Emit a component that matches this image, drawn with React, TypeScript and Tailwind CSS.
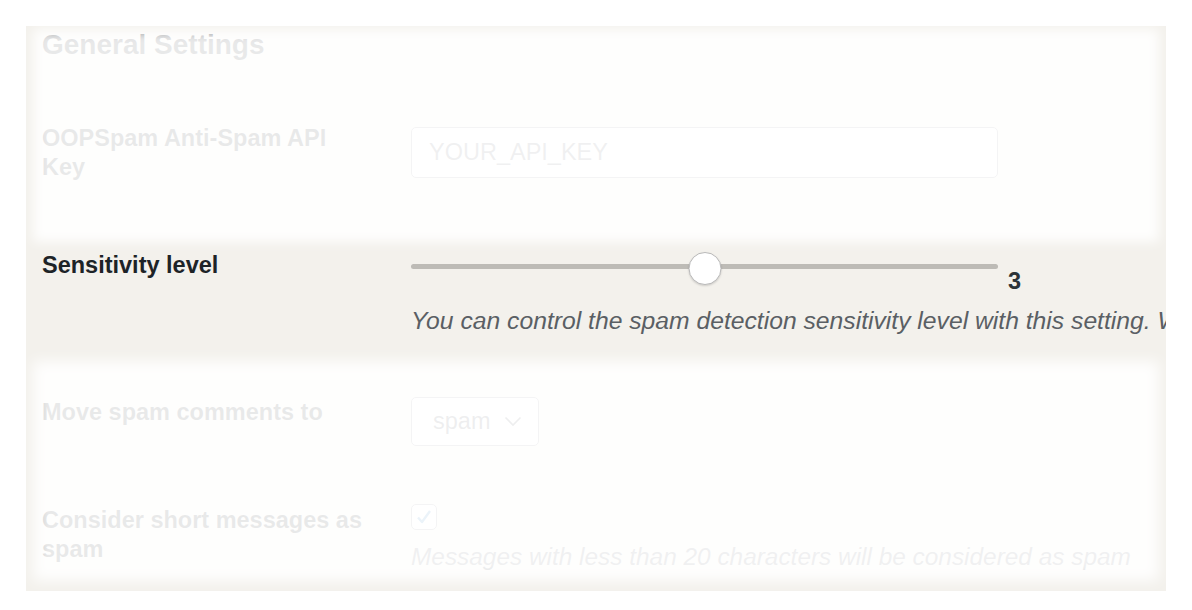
import { useState } from 'react'

const FONT = { fontFamily: '"Liberation Sans", Arial, sans-serif' }

function Row({ label, className = '', labelClass = '', children }: {
  label: React.ReactNode
  className?: string
  labelClass?: string
  children: React.ReactNode
}) {
  return (
    <div className={`flex items-start ${className}`}>
      <div className={`w-[369px] shrink-0 pr-[10px] text-[23.5px] leading-[29px] font-bold text-[#1d2327] ${labelClass}`}>
        {label}
      </div>
      <div className="flex flex-col">{children}</div>
    </div>
  )
}

export default function App() {
  const [level] = useState(3)
  const pct = ((level - 1) / 4) * 100

  return (
    <div className="min-h-screen bg-white pt-[26px] pl-[26px]" style={FONT}>
      <div className="relative w-[1140px] h-[565px] overflow-hidden bg-[#f3f1ec] pl-[16px] pt-[1px]">
        <h2 className="text-[28px] leading-[36px] font-bold text-[#1d2327]">General Settings</h2>

        {/* API key */}
        <Row label={<>OOPSpam Anti-Spam API<br />Key</>} className="mt-[61px]">
          <div className="mt-[3px] w-[587px] h-[51px] rounded-[5px] border border-[#8c8f94] bg-white pl-[17px] flex items-center">
            <span className="text-[23.5px] text-[#646970]">YOUR_API_KEY</span>
          </div>
        </Row>

        {/* Sensitivity */}
        <Row label="Sensitivity level" className="mt-[69px]">
          <div className="flex items-start mt-[1px]">
            <div className="relative w-[587px] h-[33px]">
              <div className="absolute left-0 right-0 top-[12px] h-[5px] rounded-full bg-[#bdbbb6]" />
              <div
                className="absolute top-0 w-[33px] h-[33px] -translate-x-1/2 rounded-full bg-white border border-[#b9b9b9] shadow-[0_1px_2px_rgba(0,0,0,0.15)]"
                style={{ left: `calc(16px + (100% - 32px) * ${pct / 100})` }}
              />
            </div>
            <span className="ml-[10px] mt-[18px] text-[23.5px] leading-[23px] font-bold text-[#2c3338]">{level}</span>
          </div>
          <p className="mt-[13px] whitespace-nowrap text-[24.7px] leading-[30px] italic text-[#5a5f64]">
            You can control the spam detection sensitivity level with this setting. With higher values more comments are marked as spam.
          </p>
        </Row>

        {/* Move spam */}
        <Row label="Move spam comments to" className="mt-[61px]" labelClass="pt-[1px]">
          <div className="w-[128px] h-[49px] rounded-[5px] border border-[#8c8f94] bg-white flex items-center pl-[21px]">
            <span className="text-[23.5px] text-[#50575e]">spam</span>
            <svg className="ml-[14px]" width="18" height="11" viewBox="0 0 18 11" fill="none">
              <path d="M1.5 1.5 L9 9 L16.5 1.5" stroke="#50575e" strokeWidth="1.6" />
            </svg>
          </div>
        </Row>

        {/* Short messages */}
        <Row label={<>Consider short messages as<br />spam</>} className="mt-[58px]" labelClass="pt-[2px]">
          <div className="w-[26px] h-[26px] rounded-[5px] border border-[#8c8f94] bg-white flex items-center justify-center">
            <svg width="18" height="18" viewBox="0 0 18 18" fill="none">
              <path d="M3 9.5 L7 14 L15 3" stroke="#3582c4" strokeWidth="2.4" strokeLinejoin="round" />
            </svg>
          </div>
          <p className="mt-[12px] whitespace-nowrap text-[24.4px] leading-[30px] italic text-[#646970]">
            Messages with less than 20 characters will be considered as spam
          </p>
        </Row>

        {/* dim everything but the sensitivity row */}
        <div className="pointer-events-none absolute left-[7px] right-[7px] top-[3px] h-[213px] bg-[rgba(255,255,255,0.9)] blur-[6px]" />
        <div className="pointer-events-none absolute left-[7px] right-[7px] top-[335px] bottom-[10px] bg-[rgba(255,255,255,0.9)] blur-[7px]" />
      </div>
    </div>
  )
}
